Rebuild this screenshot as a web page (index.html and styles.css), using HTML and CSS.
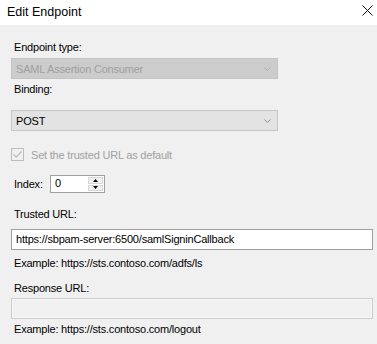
FILE: index.html
```html
<!DOCTYPE html>
<html>
<head>
<meta charset="utf-8">
<link rel="stylesheet" href="styles.css">
</head>
<body>
<div class="window">
  <div class="titlebar">
    <span class="title">Edit Endpoint</span>
    <svg class="close" width="11" height="11" viewBox="0 0 11 11"><path d="M0.5 0.5 L10.5 10.5 M10.5 0.5 L0.5 10.5" stroke="#111" stroke-width="1" fill="none"/></svg>
  </div>
  <div class="content">
    <div class="label l-type">Endpoint type:</div>
    <div class="combo disabled">
      <span>SAML Assertion Consumer</span>
      <svg class="chev" width="7" height="4" viewBox="0 0 7 4"><path d="M0.5 0.5 L3.5 3.5 L6.5 0.5" stroke="#b0b0b0" fill="none"/></svg>
    </div>
    <div class="label l-binding">Binding:</div>
    <div class="combo">
      <span>POST</span>
      <svg class="chev" width="7" height="4" viewBox="0 0 7 4"><path d="M0.5 0.5 L3.5 3.5 L6.5 0.5" stroke="#8a8a8a" fill="none"/></svg>
    </div>
    <div class="check-row">
      <span class="checkbox">
        <svg width="11" height="11" viewBox="0 0 11 11"><path d="M1.5 5.5 L4.2 8.2 L9.5 2.5" stroke="#bcbcbc" stroke-width="1.2" fill="none"/></svg>
      </span>
      <span class="check-text">Set the trusted URL as default</span>
    </div>
    <div class="index-row">
      <span class="label idx-label">Index:</span>
      <div class="spin">
        <span class="spin-val">0</span>
        <div class="spin-btns">
          <div class="spin-btn"><svg width="5" height="3" viewBox="0 0 5 3"><path d="M2.5 0 L5 3 L0 3 Z" fill="#000"/></svg></div>
          <div class="spin-btn"><svg width="5" height="3" viewBox="0 0 5 3"><path d="M0 0 L5 0 L2.5 3 Z" fill="#000"/></svg></div>
        </div>
      </div>
    </div>
    <div class="label l-trusted">Trusted URL:</div>
    <div class="textbox">https://sbpam-server:6500/samlSigninCallback</div>
    <div class="label l-example">Example: https://sts.contoso.com/adfs/ls</div>
    <div class="label l-response">Response URL:</div>
    <div class="textbox disabled"></div>
    <div class="label l-example2">Example: https://sts.contoso.com/logout</div>
  </div>
</div>
</body>
</html>
```
FILE: styles.css
```css
html, body {
  margin: 0;
  padding: 0;
  background: #f0f0f0;
}
body {
  width: 377px;
  height: 344px;
  overflow: hidden;
  font-family: "Liberation Sans", Arial, sans-serif;
  font-size: 11px;
  letter-spacing: -0.2px;
  color: #000;
}
.window {
  display: flex;
  flex-direction: column;
  height: 344px;
}
.titlebar {
  height: 25px;
  background: #fff;
  display: flex;
  align-items: center;
  justify-content: space-between;
  padding: 0 4px 0 7px;
  flex: none;
}
.title {
  font-size: 12.5px;
  letter-spacing: 0;
  margin-top: -2px;
}
.close {
  margin-top: -5px;
}
.content {
  flex: 1;
  background: #f0f0f0;
  display: flex;
  flex-direction: column;
  align-items: flex-start;
  padding: 0 4px 0 11px;
}
.label {
  line-height: 15px;
  padding-left: 3px;
}
.l-type { margin-top: 15px; margin-bottom: 3px; }
.l-binding { margin-top: 3px; margin-bottom: 13px; }
.combo {
  box-sizing: border-box;
  width: 267px;
  height: 21px;
  border: 1px solid #c6c6c6;
  background: #e3e3e3;
  display: flex;
  align-items: center;
  justify-content: space-between;
  padding: 0 6px 0 4px;
}
.combo.disabled {
  background: #cccccc;
  border-color: #c4c4c4;
  color: #a0a0a0;
}
.chev { display: block; }
.check-row {
  display: flex;
  align-items: center;
  margin-top: 17px;
  height: 13px;
}
.checkbox {
  box-sizing: border-box;
  width: 13px;
  height: 13px;
  border: 1px solid #bcbcbc;
  display: flex;
  align-items: center;
  justify-content: center;
}
.checkbox svg { display: block; }
.check-text {
  color: #a0a0a0;
  margin-left: 7px;
}
.index-row {
  display: flex;
  align-items: center;
  margin-top: 14px;
  height: 18px;
}
.idx-label { width: 36px; }
.spin {
  box-sizing: border-box;
  width: 55px;
  height: 18px;
  border: 1px solid #a0a0a0;
  background: #fff;
  display: flex;
  align-items: stretch;
}
.spin-val {
  flex: 1;
  padding-left: 4px;
  line-height: 14px;
}
.spin-btns {
  width: 15px;
  display: flex;
  flex-direction: column;
  padding: 1px 1px 1px 0;
  gap: 1px;
}
.spin-btn {
  flex: 1;
  background: #f0f0f0;
  border: 1px solid #d9d9d9;
  display: flex;
  align-items: center;
  justify-content: center;
}
.spin-btn svg { display: block; }
.l-trusted { margin-top: 14px; margin-bottom: 7px; }
.textbox {
  box-sizing: border-box;
  width: 362px;
  height: 21px;
  border: 1px solid #a0a0a0;
  background: #fff;
  padding-left: 4px;
  line-height: 19px;
}
.textbox.disabled {
  background: #f0f0f0;
  border-color: #cccccc;
  box-shadow: inset 0 0 0 1px #f7f7f7;
}
.l-example { margin-top: 6px; }
.l-response { margin-top: 10px; margin-bottom: 2px; }
.l-example2 { margin-top: 3px; }
```
